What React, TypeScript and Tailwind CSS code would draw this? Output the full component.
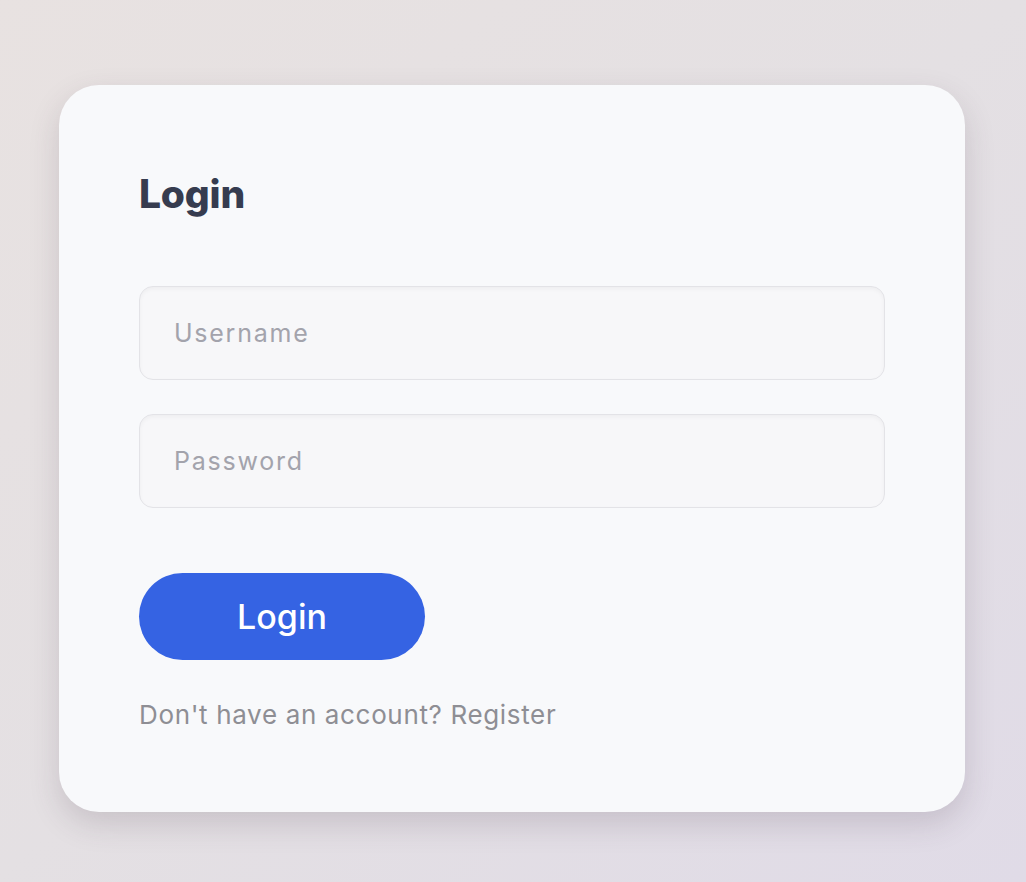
const App = () => {
  return (
    <div className="min-h-screen w-full bg-gradient-to-br from-[#e8e2e1] via-[#e4e0e3] to-[#e0dbe7] pt-[85px] pl-[59px] font-['Inter','Liberation_Sans',sans-serif]">
      {/* Login card */}
      <div className="w-[906px] h-[727px] rounded-[40px] bg-[#f8f9fb] shadow-[0_12px_30px_rgba(80,60,80,0.18)] px-[80px] pt-[84px]">
        <h1 className="text-[39px] leading-[50px] font-extrabold text-[#363c4f] tracking-[-0.005em]">
          Login
        </h1>

        <form className="mt-[67px] flex flex-col gap-[34px]">
          <input
            type="text"
            placeholder="Username"
            className="h-[94px] w-full rounded-[14px] border border-[#e3e3e7] bg-[#f7f7f9] px-[34px] text-[25px] tracking-[0.07em] text-[#3a3a40] placeholder:text-[#a3a3ac] shadow-[inset_0_2px_4px_rgba(0,0,0,0.04)] outline-none"
          />
          <input
            type="password"
            placeholder="Password"
            className="h-[94px] w-full rounded-[14px] border border-[#e3e3e7] bg-[#f7f7f9] px-[34px] text-[25px] tracking-[0.07em] text-[#3a3a40] placeholder:text-[#a3a3ac] shadow-[inset_0_2px_4px_rgba(0,0,0,0.04)] outline-none"
          />
        </form>

        <button className="mt-[65px] h-[87px] w-[286px] rounded-full bg-[#3563e3] text-white text-[34px] font-medium">
          Login
        </button>

        <p className="mt-[35px] text-[26px] tracking-[0.025em] text-[#8e8e94]">
          Don't have an account? Register
        </p>
      </div>
    </div>
  );
};

export default App;
